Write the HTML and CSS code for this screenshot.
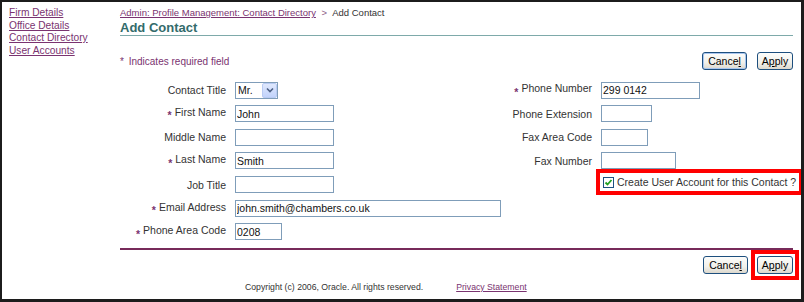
FILE: index.html
```html
<!DOCTYPE html>
<html lang="en">
<head>
    <meta charset="UTF-8">
    <title>Add Contact</title>
    <link rel="stylesheet" href="styles.css">
</head>
<body>
    <div class="frame">
        <nav class="side">
            <a href="#">Firm Details</a>
            <a href="#">Office Details</a>
            <a href="#">Contact Directory</a>
            <a href="#">User Accounts</a>
        </nav>

        <div class="main">
            <div class="crumbs">
                <a href="#">Admin: Profile Management: Contact Directory</a>
                <span class="sep">&gt;</span>
                <span>Add Contact</span>
            </div>

            <h1 class="title">Add Contact</h1>

            <div class="bar bar-top">
                <p class="note"><span class="ast">*</span> Indicates required field</p>
                <div class="buttons">
                    <button class="btn btn-cancel is-default">Cance<u>l</u></button>
                    <button class="btn btn-apply">A<u>p</u>ply</button>
                </div>
            </div>

            <div class="form">
                <div class="fields fields-left">
                    <label>Contact Title</label>
                    <div class="select">
                        <span class="select-value">Mr.</span>
                        <span class="select-btn">
                            <svg width="8" height="6" viewBox="0 0 8 6"><polyline points="1,1.5 4,4.5 7,1.5" fill="none" stroke="#4d6185" stroke-width="1.6"/></svg>
                        </span>
                    </div>

                    <label><span class="req">*</span>First Name</label>
                    <input class="w99" type="text" value="John">

                    <label>Middle Name</label>
                    <input class="w99" type="text" value="">

                    <label><span class="req">*</span>Last Name</label>
                    <input class="w99" type="text" value="Smith">

                    <label>Job Title</label>
                    <input class="w99" type="text" value="">

                    <label><span class="req">*</span>Email Address</label>
                    <input class="w266" type="text" value="john.smith@chambers.co.uk">

                    <label><span class="req">*</span>Phone Area Code</label>
                    <input class="w47" type="text" value="0208">
                </div>

                <div class="fields fields-right">
                    <label><span class="req">*</span>Phone Number</label>
                    <input class="w99" type="text" value="299 0142">

                    <label>Phone Extension</label>
                    <input class="w51" type="text" value="">

                    <label>Fax Area Code</label>
                    <input class="w47" type="text" value="">

                    <label>Fax Number</label>
                    <input class="w75" type="text" value="">

                    <span></span>
                    <label class="check-row">
                        <span class="checkbox">
                            <svg width="9" height="9" viewBox="0 0 9 9"><polyline points="1.5,4.5 3.5,6.5 7.5,2" fill="none" stroke="#21a121" stroke-width="1.8"/></svg>
                        </span>
                        Create User Account for this Contact ?
                    </label>
                </div>
            </div>

            <div class="divider"></div>

            <div class="bar bar-bottom">
                <div class="buttons">
                    <button class="btn btn-cancel">Cance<u>l</u></button>
                    <span class="mark"><button class="btn btn-apply">A<u>p</u>ply</button></span>
                </div>
            </div>

            <div class="footer">
                <span>Copyright (c) 2006, Oracle. All rights reserved.</span>
                <a href="#">Privacy Statement</a>
            </div>
        </div>
    </div>
</body>
</html>
```

FILE: styles.css
```css
* {
    margin: 0;
    padding: 0;
    box-sizing: border-box;
    font-family: "Liberation Sans", Arial, sans-serif;
}

body {
    background: #fff;
}

.frame {
    display: flex;
    width: 804px;
    height: 302px;
    border-style: solid;
    border-color: #1c1c1c;
    border-width: 2px 3px 3px 2px;
    overflow: hidden;
}

a {
    color: #7a3370;
}

/* Left navigation */
.side {
    width: 118px;
    flex-shrink: 0;
    padding: 5px 0 0 7px;
    display: flex;
    flex-direction: column;
    font-size: 10.2px;
    line-height: 12.6px;
}

.main {
    flex: 1;
    padding-right: 8px;
    color: #333;
}

/* Breadcrumb + heading */
.crumbs {
    padding-top: 5px;
    font-size: 9.5px;
    line-height: 12px;
    white-space: nowrap;
}

.crumbs .sep {
    color: #8a5a86;
    margin: 0 3px;
}

.title {
    margin-top: 1px;
    font-size: 13px;
    line-height: 15px;
    font-weight: bold;
    color: #336b6b;
    border-bottom: 1px solid #7eaaaa;
}

/* Button bars */
.bar {
    display: flex;
    align-items: center;
    justify-content: space-between;
}

.bar-top {
    padding-top: 16px;
}

.bar-bottom {
    margin-top: 6px;
    justify-content: flex-end;
}

.note {
    font-size: 10px;
    color: #7a3370;
}

.note .ast {
    margin-right: 2px;
}

.buttons {
    display: flex;
    align-items: center;
    gap: 10px;
}

.btn {
    height: 18px;
    font-size: 10.5px;
    color: #000;
    border: 1px solid #1d4f7e;
    border-radius: 3px;
    background: linear-gradient(#fdfdfb, #f1f0ea 60%, #dcd8cd);
    text-align: center;
    cursor: pointer;
}

.btn u {
    text-decoration: underline;
}

.btn-cancel {
    width: 45px;
}

.btn-apply {
    width: 36px;
}

.is-default {
    box-shadow: inset 0 0 0 1px #a9c6ef;
}

/* Red annotation boxes */
.mark {
    display: inline-flex;
    border: 4px solid #f00;
    padding: 2px;
    margin: -6px -6px -6px -7px;
}

/* Form */
.form {
    display: flex;
    margin-top: 11.5px;
}

.fields {
    display: grid;
    column-gap: 9px;
    row-gap: 6.67px;
    grid-auto-rows: 17px;
    align-items: center;
    font-size: 10.5px;
}

.fields-left {
    width: 390px;
    grid-template-columns: 106px auto;
}

.fields-right {
    flex: 1;
    grid-template-columns: 82px auto;
}

.fields label {
    text-align: right;
    white-space: nowrap;
    color: #333;
}

.req {
    color: #7a3370;
    font-weight: bold;
    font-size: 10.5px;
    vertical-align: -0.3em;
    margin-right: 3px;
}

.fields input {
    justify-self: start;
    height: 17px;
    border: 1px solid #7f9db9;
    padding: 0 1px;
    font-size: 10.5px;
    color: #111;
    background: #fff;
    outline: none;
}

.w99 { width: 99px; }
.w266 { width: 266px; }
.w47 { width: 47px; }
.w51 { width: 51px; }
.w75 { width: 75px; }

.select {
    justify-self: start;
    display: flex;
    width: 43px;
    height: 17px;
    border: 1px solid #7f9db9;
    background: #fff;
}

.select-value {
    flex: 1;
    padding-left: 2px;
    line-height: 15px;
    color: #111;
}

.select-btn {
    width: 15px;
    display: flex;
    align-items: center;
    justify-content: center;
    border: 1px solid #b9cbf3;
    border-radius: 2px;
    background: linear-gradient(#dfe8fd, #c2d3fb);
}

.check-row {
    justify-self: start;
    align-self: start;
    display: inline-flex;
    align-items: center;
    gap: 3px;
    margin: -7px -12px 0 -5px;
    padding: 2px 3px 2px 3px;
    border: 4px solid #f00;
    line-height: 14px;
    text-align: left;
}

.checkbox {
    width: 11px;
    height: 11px;
    border: 1px solid #1c5180;
    background: #fff;
    display: inline-flex;
    align-items: center;
    justify-content: center;
}

.divider {
    margin-top: 7.5px;
    height: 2px;
    background: #772a5a;
}

/* Footer */
.footer {
    display: flex;
    gap: 33px;
    margin-top: 8px;
    padding-left: 125px;
    font-size: 8.7px;
    line-height: 11px;
    color: #333;
}
```
